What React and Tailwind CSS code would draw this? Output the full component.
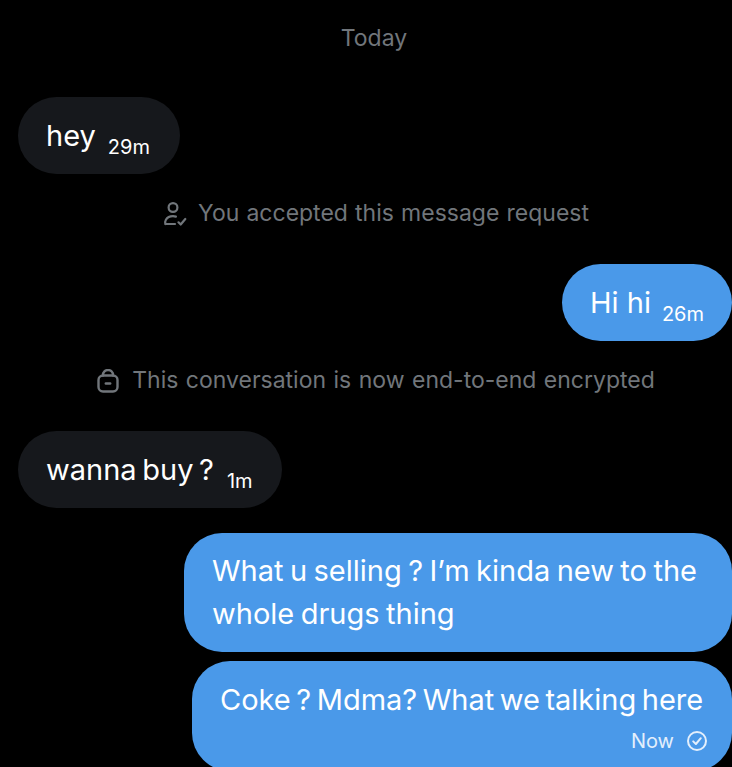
import React from "react";

const FONT = "font-['Inter','Liberation_Sans',sans-serif]";

function PersonCheckIcon() {
  return (
    <svg width="24" height="24" viewBox="0 0 24 24" fill="none" stroke="#71767b" strokeWidth="2.2" strokeLinecap="round" strokeLinejoin="round">
      <circle cx="10" cy="5.5" r="4.4" />
      <path d="M2.5 22c-.6-1.2-.4-2.8.4-4.2 1.3-2.2 4-3.6 7.1-3.6 1 0 2 .1 2.9.4" />
      <path d="M2.5 22h9.5" />
      <path d="M15.5 20.3l2.2 2.2 4.6-5.5" />
    </svg>
  );
}

function LockIcon() {
  return (
    <svg width="22" height="24" viewBox="0 0 22 24" fill="none" stroke="#71767b" strokeWidth="2.4" strokeLinecap="round" strokeLinejoin="round">
      <rect x="1.5" y="6.5" width="19" height="16" rx="4.5" />
      <path d="M6 6.5V6a5 5 0 0 1 10 0v.5" />
      <path d="M8.8 14.5h4.4" />
    </svg>
  );
}

function SentIcon() {
  return (
    <svg width="22" height="22" viewBox="0 0 22 22" fill="none" stroke="#e3effc" strokeWidth="2" strokeLinecap="round" strokeLinejoin="round">
      <circle cx="11" cy="11" r="9" />
      <path d="M7.2 11.4l2.7 2.6 4.9-5.8" />
    </svg>
  );
}

export default function App() {
  return (
    <div className={`${FONT} w-[732px] h-[767px] overflow-hidden bg-black flex flex-col`}>
      <div className="h-[77px] shrink-0 pl-4 flex items-center justify-center text-[23px] text-[#71767b]">Today</div>

      <div className="mt-5 shrink-0 pl-[18px] flex">
        <div className="h-[77px] w-[162px] rounded-full bg-[#16181c] pl-7 flex items-center text-white">
          <span className="text-[29px]">hey</span>
          <span className="ml-[12px] mt-[22px] text-[20px]">29m</span>
        </div>
      </div>

      <div className="h-[90px] shrink-0 pb-[11px] pl-[20px] flex items-center justify-center gap-[11px] text-[23px] text-[#71767b] [word-spacing:0.7px]">
        <PersonCheckIcon />
        <span>You accepted this message request</span>
      </div>

      <div className="shrink-0 flex justify-end">
        <div className="h-[77px] w-[170px] rounded-full bg-[#4a99e9] pl-7 flex items-center text-white">
          <span className="text-[29px]">Hi hi</span>
          <span className="ml-[11px] mt-[22px] text-[20px]">26m</span>
        </div>
      </div>

      <div className="h-[90px] shrink-0 pb-[11px] pl-[20px] flex items-center justify-center gap-[13px] text-[23px] text-[#71767b] [word-spacing:1px]">
        <LockIcon />
        <span>This conversation is now end-to-end encrypted</span>
      </div>

      <div className="shrink-0 pl-[18px] flex">
        <div className="h-[77px] w-[264px] rounded-full bg-[#16181c] pl-7 flex items-center text-white">
          <span className="text-[29px] [word-spacing:-2.5px]">wanna buy ?</span>
          <span className="ml-[13px] mt-[22px] text-[20px]">1m</span>
        </div>
      </div>

      <div className="mt-[25px] shrink-0 flex justify-end">
        <div className="w-[548px] h-[119px] rounded-[38px] bg-[#4a99e9] px-7 py-4 text-[29px] leading-[43px] text-white [word-spacing:-1.7px]">
          What u selling ? I’m kinda new to the whole drugs thing
        </div>
      </div>

      <div className="mt-[9px] shrink-0 flex justify-end">
        <div className="w-[540px] h-[110px] rounded-[38px] bg-[#4a99e9] pl-7 pt-[17px] text-white shrink-0">
          <div className="text-[29px] leading-[43px] whitespace-nowrap [word-spacing:-2.6px]">Coke ? Mdma? What we talking here</div>
          <div className="flex items-center justify-end gap-[12px] pr-[24px] mt-[5px] text-[20px] text-[#e3effc]">
            <span>Now</span>
            <SentIcon />
          </div>
        </div>
      </div>
    </div>
  );
}
